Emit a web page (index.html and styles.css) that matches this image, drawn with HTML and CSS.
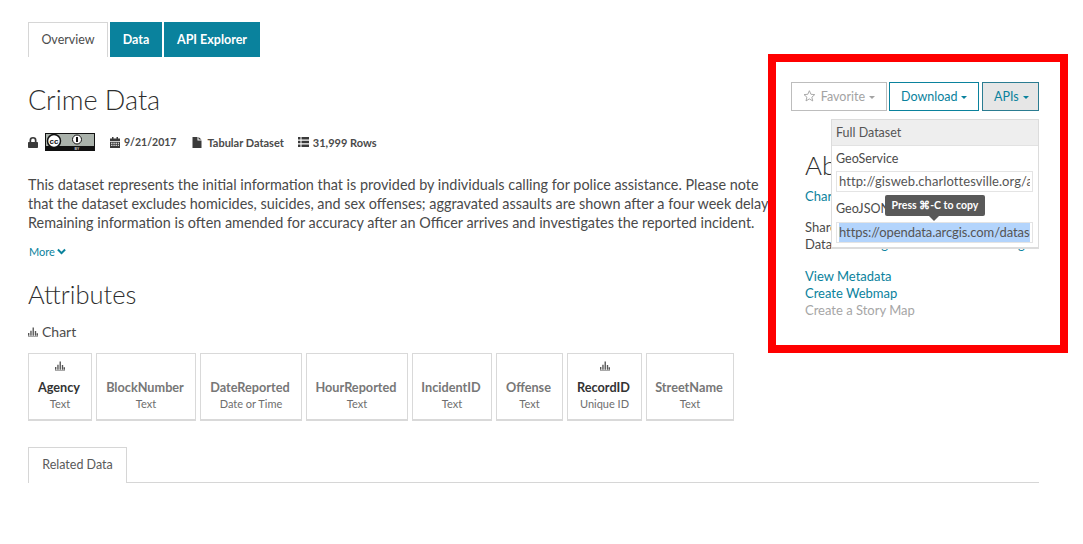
FILE: index.html
```html
<!DOCTYPE html>
<html lang="en">
<head>
<meta charset="utf-8">
<title>Crime Data</title>
<link rel="stylesheet" href="styles.css">
</head>
<body>
<svg class="defs" width="0" height="0" aria-hidden="true">
  <symbol id="bars" viewBox="0 0 11 10"><path d="M0 6h1.500v3H0zM2.500 3.500H4V9H2.500zM5 0h1.500v9H5zM7.500 4H9v5H7.500zM9.500 6.500H11V9H9.500zM0 9.300h11V10H0z"/></symbol>
</svg>
<main class="page">
  <nav class="tabs">
    <a class="tab active">Overview</a>
    <a class="tab filled">Data</a>
    <a class="tab filled">API Explorer</a>
  </nav>
  <h1 class="title">Crime Data</h1>
  <div class="meta">
    <svg class="ico lock" viewBox="0 0 10 11"><path d="M1.500 5V3.300a3.500 3.300 0 0 1 7 0V5h.7a.8.800 0 0 1 .8.800v4.400a.8.800 0 0 1-.8.800H.8a.8.800 0 0 1-.8-.8V5.800A.8.800 0 0 1 .8 5zm1.700 0h3.600V3.300a1.800 1.700 0 0 0-3.600 0z"/></svg>
    <svg class="cc" viewBox="0 0 50 18">
      <rect width="50" height="18" fill="#111"/>
      <rect x="1" y="1" width="48" height="12" fill="#aab2ab"/>
      <circle cx="9" cy="8" r="6.500" fill="#fff" stroke="#111" stroke-width="1.500"/>
      <text x="9" y="10.500" class="cc-mark">cc</text>
      <circle cx="32" cy="6.500" r="4.500" fill="#fff" stroke="#111"/>
      <path d="M31 4h2v5h-2z" fill="#111"/>
      <text x="32" y="16.800" class="cc-by">BY</text>
    </svg>
    <span class="meta-item cal">
      <svg class="ico" viewBox="0 0 10 11"><path d="M0 1.500h2V0h1.500v1.500h3V0H8v1.500h2V4H0zM0 4.700h10V11H0zm1 1v1h1.500v-1zm2.300 0v1h1.500v-1zm2.200 0v1H7v-1zm2.300 0v1H9v-1zM1 7.700v1h1.500v-1zm2.300 0v1h1.500v-1zm2.200 0v1H7v-1zm2.300 0v1H9v-1z" fill-rule="evenodd"/></svg>
      9/21/2017
    </span>
    <span class="meta-item file">
      <svg class="ico" viewBox="0 0 9 11"><path d="M0 0h5v3.500h4V11H0zM6 0l3 2.600H6z"/></svg>
      Tabular Dataset
    </span>
    <span class="meta-item">
      <svg class="ico wide" viewBox="0 0 11 10"><path d="M0 0h2.500v2.500H0zM3.500 0H11v2.500H3.500zM0 3.700h2.500v2.500H0zM3.500 3.700H11v2.500H3.500zM0 7.400h2.500V10H0zM3.500 7.400H11V10H3.500z"/></svg>
      31,999 Rows
    </span>
  </div>
  <p class="desc">This dataset represents the initial information that is provided by individuals calling for police assistance. Please note<br>that the dataset excludes homicides, suicides, and sex offenses; aggravated assaults are shown after a four week delay.<br>Remaining information is often amended for accuracy after an Officer arrives and investigates the reported incident.</p>
  <a class="more">More <svg class="chev" viewBox="0 0 10 7"><path d="M1 1.300l4 4 4-4" fill="none" stroke="currentColor" stroke-width="2.200"/></svg></a>
  <h2 class="subtitle">Attributes</h2>
  <div class="chart-link"><svg class="bars"><use href="#bars"/></svg> Chart</div>
  <div class="cards">
    <div class="card on"><svg class="bars"><use href="#bars"/></svg><b>Agency</b><span>Text</span></div>
    <div class="card"><b>BlockNumber</b><span>Text</span></div>
    <div class="card"><b>DateReported</b><span>Date or Time</span></div>
    <div class="card"><b>HourReported</b><span>Text</span></div>
    <div class="card"><b>IncidentID</b><span>Text</span></div>
    <div class="card"><b>Offense</b><span>Text</span></div>
    <div class="card on"><svg class="bars"><use href="#bars"/></svg><b>RecordID</b><span>Unique ID</span></div>
    <div class="card"><b>StreetName</b><span>Text</span></div>
  </div>
  <div class="lower-tabs"><a class="tab active">Related Data</a></div>
</main>

<aside class="callout">
  <div class="actions">
    <button class="btn muted"><svg class="star" viewBox="0 0 14 14"><path d="M7 1.200l1.700 3.900 4.200.4-3.200 2.800 1 4.100L7 10.200l-3.700 2.200 1-4.100L1.100 5.500l4.200-.4z" fill="none" stroke="currentColor"/></svg>Favorite<i class="caret"></i></button>
    <button class="btn">Download<i class="caret"></i></button>
    <button class="btn pressed">APIs<i class="caret"></i></button>
  </div>
  <div class="about">
    <h2 class="about-title">About</h2>
    <a class="link">Charlottesville, VA</a>
    <p class="about-text">Shared By: Charlottesville<br>Data Source: <a class="link">gisweb.charlottesville.org</a></p>
    <a class="link">View Metadata</a>
    <a class="link">Create Webmap</a>
    <a class="link off">Create a Story Map</a>
  </div>
  <div class="menu">
    <div class="menu-head">Full Dataset</div>
    <div class="menu-body">
      <label class="menu-label">GeoService</label>
      <div class="url"><span class="val">http://gisweb.charlottesville.org/arcgis/rest</span></div>
      <label class="menu-label json">GeoJSON</label>
      <div class="url"><span class="val sel">https://opendata.arcgis.com/datasets/abc</span></div>
    </div>
    <div class="tip">Press ⌘-C to copy</div>
  </div>
</aside>
</body>
</html>
```
FILE: styles.css
```css
* { box-sizing: border-box; }
html, body { margin: 0; padding: 0; background: #fff; }
body {
  width: 1083px;
  height: 544px;
  overflow: hidden;
  position: relative;
  font-family: Lato, "Liberation Sans", sans-serif;
  color: #4c4c4c;
  font-size: 14px;
}
.defs { position: absolute; }
.page { width: 1039px; padding: 22px 0 0 28px; }

.tabs { display: flex; gap: 2px; height: 35px; }
.tab {
  display: flex;
  align-items: center;
  justify-content: center;
  font-size: 12.500px;
  padding-bottom: 2px;
}
.tab.active {
  border: 1px solid #d6d6d6;
  border-bottom: 0;
  background: #fff;
}
.tabs .tab.active { width: 80px; }
.tab.filled { background: #0a829d; color: #fff; font-weight: 700; padding-bottom: 0; }
.tabs .tab:nth-child(2) { width: 52px; }
.tabs .tab:nth-child(3) { width: 96px; }

.title { margin: 26px 0 0; font-size: 27px; line-height: 34px; font-weight: 300; color: #2e2e2e; }

.meta { display: flex; align-items: center; height: 18px; margin-top: 16px; font-size: 11px; font-weight: 700; color: #4a4a4a; }
.ico { width: 10px; height: 11px; fill: #3a3a3a; margin-right: 4px; flex: none; }
.ico.wide { width: 11px; height: 10px; }
.lock { margin-right: 7px; }
.cc { width: 50px; height: 18px; margin-right: 15px; }
.cc-mark { font: 700 8px "Liberation Sans", sans-serif; text-anchor: middle; fill: #111; }
.cc-by { font: 700 3.500px "Liberation Sans", sans-serif; text-anchor: middle; fill: #ccc; }
.meta-item { display: flex; align-items: center; margin-right: 14px; white-space: nowrap; }
.meta-item.cal { margin-right: 16px; font-size: 10.500px; }
.meta-item.file .ico { margin-right: 5px; }

.desc { margin: 24px 0 0; width: 780px; font-size: 14.400px; line-height: 19px; white-space: nowrap; color: #4a4a4a; }
.more { display: flex; align-items: center; gap: 2px; margin-top: 12px; padding-left: 1px; font-size: 11px; line-height: 15px; color: #0a829d; }
.chev { width: 9px; height: 7px; }

.subtitle { margin: 19px 0 0; font-size: 25.500px; line-height: 32px; font-weight: 300; color: #2e2e2e; }
.chart-link { display: flex; align-items: center; gap: 4px; margin-top: 13px; font-size: 14px; line-height: 18px; }
.bars { width: 10px; height: 10px; fill: #555; }

.cards {
  display: grid;
  grid-template-columns: 64px 100px 102px 102px 80px 67px 75px 88px;
  column-gap: 4px;
  margin-top: 12px;
}
.card {
  height: 68px;
  border: 1px solid #d9d9d9;
  border-bottom-width: 2px;
  display: flex;
  flex-direction: column;
  align-items: center;
  justify-content: flex-end;
  padding-bottom: 7px;
  position: relative;
  color: #6e6e6e;
}
.card .bars { margin-bottom: 8px; }
.card b { margin-right: 2px; font-size: 12.700px; line-height: 16px; font-weight: 700; color: #777; }
.card.on b { color: #333; }
.card span { font-size: 11px; line-height: 17px; }

.lower-tabs { display: flex; margin-top: 26px; height: 36px; border-bottom: 1px solid #d6d6d6; }
.lower-tabs .tab { width: 99px; height: 36px; color: #5a5a5a; }

.callout {
  position: absolute;
  left: 768px;
  top: 54px;
  width: 300px;
  height: 299px;
  border: 8px solid #f00;
  background: #fff;
  padding: 20px 21px 0 15px;
}
.actions { display: flex; justify-content: flex-end; gap: 3px; }
.btn {
  height: 29px;
  padding: 0 11px 1px;
  border: 1px solid #0a829d;
  background: #fff;
  color: #0a829d;
  font: 400 12.500px Lato, "Liberation Sans", sans-serif;
  display: flex;
  align-items: center;
}
.btn.muted { width: 96px; margin-right: -1px; border-color: #bdbdbd; color: #a3a3a3; }
.btn:nth-child(2) { width: 90px; }
.btn.pressed { width: 57px; background: #e6e6e6; border-color: #2b7c91; }
.star { width: 14px; height: 14px; margin-right: 5px; }
.caret { width: 0; height: 0; margin-left: 4px; margin-top: 2px; border: 3.500px solid transparent; border-top-color: currentColor; border-bottom: 0; }

.about { padding: 37px 0 0 14px; }
.about-title { margin: 0 0 6px; font-size: 26px; line-height: 34px; font-weight: 300; color: #2e2e2e; }
.link { display: block; font-size: 13px; line-height: 17px; color: #0a829d; }
.link.off { color: #a6a6a6; }
.about-text { margin: 14px 0 15px; font-size: 13px; line-height: 17px; white-space: nowrap; color: #4a4a4a; }
.about-text .link { display: inline; }

.menu {
  position: absolute;
  left: 55px;
  top: 57px;
  width: 208px;
  height: 130px;
  background: #fff;
  border: 1px solid #dcdcdc;
  border-bottom-width: 2px;
}
.menu-head { height: 26px; padding: 0 4px; display: flex; align-items: center; background: #eee; border-bottom: 1px solid #e2e2e2; font-size: 12.500px; color: #555; }
.menu-body { padding: 3px 5px 0 4px; }
.menu-label { display: block; height: 22px; line-height: 20px; font-size: 12.500px; color: #4a4a4a; }
.menu-label.json { margin-top: 7px; height: 23px; line-height: 20px; }
.url {
  height: 21px;
  padding: 0 2px;
  border: 1px solid #e4e4e4;
  font-size: 13px;
  line-height: 19px;
  letter-spacing: .08px;
  white-space: nowrap;
  color: #555;
}
.val { display: block; overflow: hidden; }
.sel { background: #b3d4fc; letter-spacing: -.08px; }
.tip {
  position: absolute;
  left: 53px;
  top: 75px;
  width: 100px;
  height: 21px;
  background: #595959;
  border-radius: 2px;
  color: #fff;
  font-size: 10.500px;
  font-weight: 700;
  line-height: 20px;
  text-align: center;
}
.tip::after {
  content: "";
  position: absolute;
  left: 44px;
  top: 21px;
  border: 5px solid transparent;
  border-top-color: #595959;
  border-bottom: 0;
}
```
